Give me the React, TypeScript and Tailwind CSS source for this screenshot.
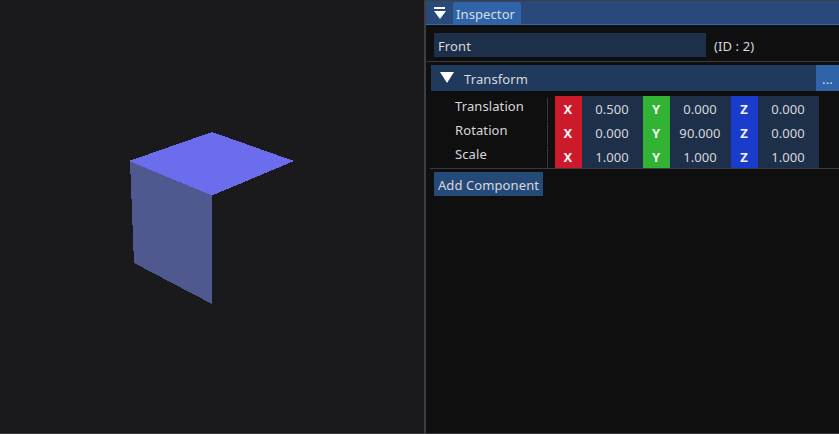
const rows = [
  { label: "Translation", x: "0.500", y: "0.000", z: "0.000" },
  { label: "Rotation", x: "0.000", y: "90.000", z: "0.000" },
  { label: "Scale", x: "1.000", y: "1.000", z: "1.000" },
];

function Axis({ name, value, color }: { name: string; value: string; color: string }) {
  return (
    <>
      <div className={`w-[27px] h-full pt-[2px] pr-[1px] flex items-center justify-center font-bold text-[#f2f2f5] ${color}`}>{name}</div>
      <div className="w-[61px] h-full pt-[2px] pr-[1px] flex items-center justify-center bg-[#1e2f4a] text-[#d8d8dc]">{value}</div>
    </>
  );
}

export default function App() {
  return (
    <div
      className="w-[839px] h-[434px] flex overflow-hidden bg-[#0f0f0f] text-[13px] leading-[18px] tracking-[0.1px] text-[#d8d8dc]"
      style={{ fontFamily: '"Noto Sans", "Open Sans", sans-serif' }}
    >
      <div className="w-[424px] h-full shrink-0 bg-[#1a1a1c] border-b border-[#38383c]">
        <svg width="424" height="433" viewBox="0 0 424 433" className="block" shapeRendering="crispEdges">
          <polygon points="130,161 212,195.5 212,304 134,263" fill="#50598f" />
          <polygon points="212,132 294,161 212,195.5 129,161" fill="#6b6dec" />
        </svg>
      </div>
      <div className="w-[2px] h-full shrink-0 bg-[#3d3d42]" />
      <div className="flex-1 h-full flex flex-col border-t border-b border-t-[#3d3d42] border-b-[#38383c]">
        <div className="h-[24px] shrink-0 flex items-end pl-[8px] bg-[#29497a] border-b border-[#3468ad]">
          <div className="w-[12px] mr-[7px] h-[23px] flex flex-col items-start pt-[6px] gap-[2px] shrink-0">
            <div className="w-[11px] h-[2px] bg-white" />
            <svg width="12" height="8" viewBox="0 0 12 8" className="block"><polygon points="0,0 12,0 6,8" fill="#fff" /></svg>
          </div>
          <div className="w-[68px] h-[22px] pt-[2px] bg-[#2f65a8] rounded-t-[3px] flex items-center pl-[3px] text-[#d8dce6]">Inspector</div>
        </div>
        <div className="flex items-center h-[24px] mt-[8px] ml-[8px] shrink-0">
          <div className="w-[272px] h-full pt-[2px] bg-[#1e2f4a] flex items-center pl-[4px]">Front</div>
          <div className="ml-[8px] pt-[2px] text-[#d8d8dc]">(ID : 2)</div>
        </div>
        <div className="h-px mt-[4px] ml-[1px] bg-[#3a3a3e] shrink-0" />
        <div className="flex h-[26px] mt-[3px] ml-[5px] shrink-0">
          <div className="flex-1 pt-[1px] bg-[#1f3a5d] flex items-center">
            <svg width="14" height="11" viewBox="0 0 14 11" className="ml-[9px] mb-[3px]"><polygon points="0,0 14,0 7,11" fill="#fff" /></svg>
            <span className="ml-[10px]">Transform</span>
          </div>
          <div className="w-[23px] pt-[1px] bg-[#2f65a8] flex items-center justify-center text-[#d8dce6]">...</div>
        </div>
        <div className="mt-[5px] ml-[4px] border-b border-[#3a3a3e] shrink-0">
          {rows.map((r) => (
            <div key={r.label} className="flex h-[24px] items-stretch">
              <div className="w-[118px] pl-[25px] leading-[16px] border-r border-[#3a3a3e] mt-[2px] mb-[-1px] last:mb-0 mr-[7px]">{r.label}</div>
              <div className="flex items-center">
                <Axis name="X" value={r.x} color="bg-[#cc1a2a]" />
                <Axis name="Y" value={r.y} color="bg-[#33b333]" />
                <Axis name="Z" value={r.z} color="bg-[#1a3ccc]" />
              </div>
            </div>
          ))}
        </div>
        <div className="mt-[3px] ml-[8px] w-[109px] h-[24px] pt-[2px] bg-[#254a78] flex items-center justify-center shrink-0">Add Component</div>
      </div>
    </div>
  );
}
